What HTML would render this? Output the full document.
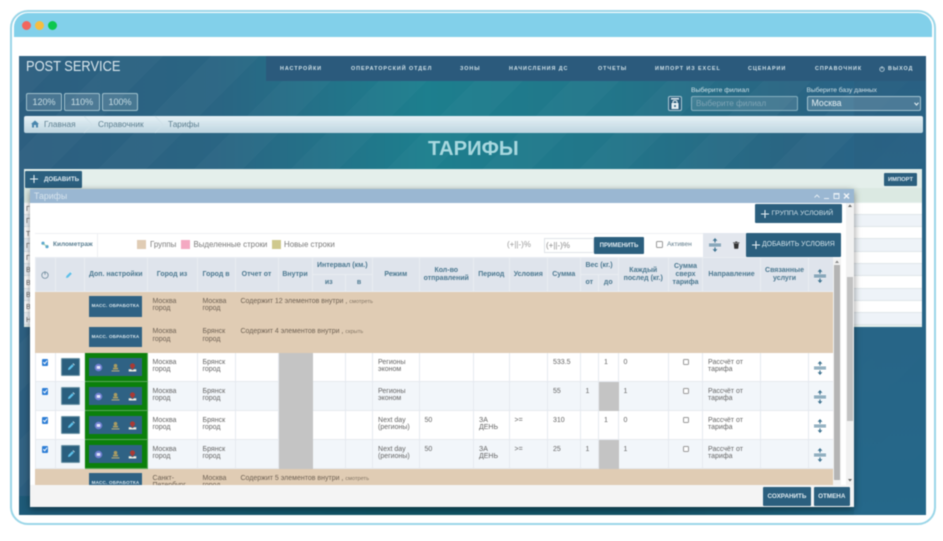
<!DOCTYPE html>
<html lang="ru"><head><meta charset="utf-8"><title>Тарифы</title>
<style>
*{box-sizing:border-box}
html,body{margin:0;padding:0;background:#fff}
body{width:943px;height:541px;overflow:hidden;position:relative;font-family:"Liberation Sans",sans-serif}
#w{position:absolute;left:0;top:0;width:943px;height:541px;filter:blur(.45px)}
.a{position:absolute;white-space:nowrap}
.nav{position:absolute;top:66px;font-size:5.4px;line-height:7px;font-weight:bold;letter-spacing:.95px;color:#d2e2e9;white-space:nowrap}
.zb{position:absolute;top:93px;width:36px;height:18px;border:1px solid #9fc0cc;border-radius:2px;background:rgba(255,255,255,.14);color:#c7dde4;font-size:9px;line-height:16px;text-align:center}
.btn{position:absolute;background:#2b5f7e;color:#dfeaf0;white-space:nowrap;text-align:center;border-radius:1px}
.row{position:absolute;left:0;width:898px;height:12.3px;border-bottom:1px solid #dfe6ea}
table{border-collapse:collapse;table-layout:fixed;width:798px;position:absolute;left:-.5px;top:0}
td,th{border:1px solid #e6eaef;padding:0;vertical-align:top;overflow:hidden}
th{background:#dfe4ec;color:#4b7890;font-size:7px;line-height:8px;font-weight:bold;text-align:center;vertical-align:middle;border-color:#e9edf2}
td{font-size:7px;line-height:7.7px;color:#666;padding:5.5px 4px 0 5px}
tr.g td{background:#e0ccb4;border-color:#e0ccb4;color:#6f6254}
tr.d td{height:29px;background:#fff}
tr.e td{background:#f2f6fa}
tr.d td.gr,tr.e td.gr{background:#c4c4c4;border-color:#c4c4c4}
td.gn{background:#0b800b!important;padding:0;position:relative;border-color:#5aa85a}
td.c{padding:0;position:relative}
.mb{position:absolute;left:4px;top:4px;width:53px;height:20.5px;background:#2f6284;color:#dce8ee;font-size:4.6px;font-weight:bold;line-height:20.5px;text-align:center;letter-spacing:.2px}
.gb{position:absolute;left:4px;top:5px;width:53px;height:18px;background:#2f6284}
.eb{position:absolute;left:5px;top:5px;width:19.5px;height:18px;background:#2b5f7e;border:1px solid #6d95a8;border-radius:1px}
.cb{position:absolute;left:6px;top:6px;width:6.5px;height:6.5px;background:#2f7fd6;border-radius:1px}
.ub{position:absolute;left:13.5px;top:5.5px;width:6.5px;height:6.5px;background:#fff;border:1px solid #9a9a9a;border-radius:1.2px}
small{font-size:5.6px;color:#857766}
svg{position:absolute;overflow:visible}
</style></head><body>
<svg width="0" height="0" style="position:absolute"><defs>
<symbol id="sp" viewBox="0 0 12 14"><path d="M0 6.2H12M0 7.8H12" stroke="#3e7390" stroke-width=".8" fill="none"/><path d="M6 1V4.6M6 9.4V13" stroke="#3e7390" stroke-width="1.2"/><path d="M3.6 2.8L6 0L8.4 2.8ZM3.6 11.2L6 14L8.4 11.2Z" fill="#3e7390"/></symbol>
<symbol id="pn" viewBox="0 0 8 8"><path d="M1 7L1.4 5L5.2 1.2L6.8 2.8L3 6.6Z" fill="#5cc0ea"/><path d="M5.6 .8L6.2 .2L7.8 1.8L7.2 2.4Z" fill="#d6eef8"/></symbol>
<symbol id="ck" viewBox="0 0 8 8"><path d="M1.6 4L3.3 5.8L6.4 2" stroke="#fff" stroke-width="1.2" fill="none"/></symbol>
<symbol id="i1" viewBox="0 0 10 10"><circle cx="5" cy="5" r="4.2" fill="#6f7fd0"/><rect x="3" y="3.3" width="4" height="3.2" rx=".5" fill="#dfe4f8"/></symbol>
<symbol id="i2" viewBox="0 0 10 10"><circle cx="5" cy="3" r="2" fill="#a99c63"/><path d="M2.2 7.2V5.2H7.8V7.2Z" fill="#a99c63"/><path d="M.6 8.8H9.4" stroke="#b9ad78" stroke-width="1.2"/></symbol>
<symbol id="i3" viewBox="0 0 10 10"><path d="M5 .4C3 .4 2.2 1.9 2.2 3.2C2.2 4.7 5 7.2 5 7.2C5 7.2 7.8 4.7 7.8 3.2C7.8 1.9 7 .4 5 .4Z" fill="#a93a35"/><path d="M.8 7H3.2L5 8L6.8 7H9.2V9.4H.8Z" fill="#f0ece0"/></symbol>
<symbol id="pl" viewBox="0 0 10 10"><path d="M5 0V10M0 5H10" stroke="#e6f0f5" stroke-width="1.3"/></symbol>
</defs></svg>
<div id="w">
<!-- frame -->
<div class="a" style="left:10px;top:10px;width:926px;height:515px;border:2px solid #9ad6e8;border-radius:18px"></div>
<div class="a" style="left:13.5px;top:13px;width:918px;height:23.5px;background:#82d0ea;border-radius:14px 14px 0 0"></div>
<div class="a" style="left:21.5px;top:21px;width:9px;height:9px;border-radius:50%;background:#f2665e"></div>
<div class="a" style="left:35px;top:21px;width:9px;height:9px;border-radius:50%;background:#f7bd3f"></div>
<div class="a" style="left:48px;top:21px;width:9px;height:9px;border-radius:50%;background:#0dc74e"></div>
<!-- page -->
<div class="a" style="left:19px;top:56px;width:907px;height:459px;overflow:hidden;background:repeating-linear-gradient(135deg,rgba(255,255,255,.022) 0 34px,rgba(255,255,255,0) 34px 68px),linear-gradient(90deg,#2d5f80 0%,#2a6583 22%,#1d7f8e 45%,#22768a 65%,#2a6583 85%,#27638a 100%)">
<div class="a" style="left:0;top:440px;width:907px;height:19px;background:linear-gradient(90deg,#1e5a78 0%,#0f5566 40%,#145468 70%,#24688a 100%)"></div>
<div class="a" style="left:835px;top:0;width:72px;height:459px;background:linear-gradient(180deg,rgba(43,95,128,.7),#25688a)"></div>
</div>
<div class="a" style="left:266px;top:56px;width:660px;height:25px;background:#2b5a7c"></div>
<div class="a" style="left:26px;top:56.5px;font-size:14.6px;line-height:20px;color:#d9e6ec;transform:scaleX(.88);transform-origin:left center">POST SERVICE</div>
<div class="nav" style="left:280px">НАСТРОЙКИ</div>
<div class="nav" style="left:351px">ОПЕРАТОРСКИЙ ОТДЕЛ</div>
<div class="nav" style="left:460px">ЗОНЫ</div>
<div class="nav" style="left:509px">НАЧИСЛЕНИЯ ДС</div>
<div class="nav" style="left:598px">ОТЧЕТЫ</div>
<div class="nav" style="left:655px">ИМПОРТ ИЗ EXCEL</div>
<div class="nav" style="left:748px">СЦЕНАРИИ</div>
<div class="nav" style="left:815px">СПРАВОЧНИК</div>
<svg style="left:879px;top:65.5px" width="6" height="6" viewBox="0 0 6 6"><circle cx="3" cy="3.2" r="2.2" fill="none" stroke="#c8dbe3" stroke-width=".8"/><path d="M3 .4V3" stroke="#c8dbe3" stroke-width=".8"/></svg>
<div class="nav" style="left:888px">ВЫХОД</div>
<div class="zb" style="left:26px">120%</div><div class="zb" style="left:64px">110%</div><div class="zb" style="left:102px">100%</div>
<div class="a" style="left:691px;top:87px;font-size:6.8px;line-height:8px;color:#cfe0e6">Выберите филиал</div>
<div class="a" style="left:806.5px;top:87px;font-size:6.6px;line-height:8px;color:#cfe0e6">Выберите базу данных</div>
<div class="a" style="left:668px;top:96px;width:14px;height:15px;border:1px solid #a9c6d2;border-radius:2px;background:#2a5d7c"></div>
<svg style="left:670px;top:98px" width="10" height="12" viewBox="0 0 10 12"><rect x="1" y="0" width="8" height="1.6" fill="#d9e6ec"/><path d="M3 5V3.8C3 2.2 7 2.2 7 3.8V5" fill="none" stroke="#e6eff3" stroke-width="1"/><rect x="1.5" y="5" width="7" height="6" fill="#e6eff3"/><circle cx="5" cy="8" r="1" fill="#2a5d7c"/></svg>
<div class="a" style="left:690.5px;top:96px;width:107.5px;height:15px;border:1px solid #86afbf;border-radius:2px;background:rgba(255,255,255,.12);color:#7fa4b5;font-size:8.2px;line-height:13px;padding-left:4.5px">Выберите филиал</div>
<div class="a" style="left:806.5px;top:96px;width:114px;height:15px;border:1px solid #a3c3cf;border-radius:2px;background:rgba(255,255,255,.16);color:#e4eef2;font-size:8.8px;line-height:13px;padding-left:4px">Москва</div>
<svg style="left:913.5px;top:101.5px" width="5" height="4" viewBox="0 0 5 4"><path d="M.5 .8L2.5 3L4.5 .8" fill="none" stroke="#e4eef2" stroke-width="1.1"/></svg>
<!-- breadcrumb -->
<div class="a" style="left:23.5px;top:116px;width:899px;height:16.5px;border-radius:2px;background:linear-gradient(180deg,#e6f1f6,#bed5e0)"></div>
<svg style="left:31px;top:120px" width="8" height="8" viewBox="0 0 8 8"><path d="M0 4L4 .5L8 4H7V7.5H5V5H3V7.5H1V4Z" fill="#4a86ad"/></svg>
<div class="a" style="left:44px;top:119px;font-size:8.3px;line-height:10px;color:#5d7f90">Главная</div>
<svg style="left:83px;top:116px" width="10" height="17" viewBox="0 0 10 17"><path d="M1 0L9 8.5L1 17" fill="none" stroke="#cfe0e8" stroke-width=".8"/></svg>
<div class="a" style="left:98px;top:119px;font-size:8.3px;line-height:10px;color:#5d7f90">Справочник</div>
<svg style="left:154px;top:116px" width="10" height="17" viewBox="0 0 10 17"><path d="M1 0L9 8.5L1 17" fill="none" stroke="#cfe0e8" stroke-width=".8"/></svg>
<div class="a" style="left:168px;top:119px;font-size:8.3px;line-height:10px;color:#5d7f90">Тарифы</div>
<div class="a" style="left:428px;top:137px;font-size:20.2px;line-height:25px;font-weight:bold;color:#a8d8df">ТАРИФЫ</div>
<!-- panel -->
<div class="a" style="left:24px;top:169px;width:898px;height:157.5px;background:#e4efeb;overflow:hidden">
<div class="a" style="left:0;top:19px;width:898px;height:14px;background:#dbe9e2"></div>
<div class="row" style="top:33.5px;background:#fff"></div><div class="row" style="top:45.8px;background:#eef3f8"></div>
<div class="row" style="top:58.1px;background:#fff"></div><div class="row" style="top:70.4px;background:#eef3f8"></div>
<div class="row" style="top:82.7px;background:#fff"></div><div class="row" style="top:95px;background:#eef3f8"></div>
<div class="row" style="top:107.3px;background:#fff"></div><div class="row" style="top:119.6px;background:#eef3f8"></div>
<div class="row" style="top:131.9px;background:#fff"></div><div class="row" style="top:144.2px;background:#eef3f8"></div>
</div>
<div class="a" style="left:26px;top:204px;font-size:7px;line-height:12.3px;color:#666;white-space:normal;width:5px">Г<br>Г<br>Т<br>Г<br>Г<br>В<br>В<br>В<br>В<br>Н</div>
<div class="btn" style="left:25px;top:171px;width:57px;height:17px;background:#2b5f7e"></div>
<svg style="left:29.5px;top:175px" width="8" height="8"><use href="#pl"/></svg>
<div class="a" style="left:44px;top:176px;font-size:6.2px;line-height:7px;font-weight:bold;color:#dfeaf0">ДОБАВИТЬ</div>
<div class="btn" style="left:884px;top:173px;width:33px;height:13px;font-size:5.8px;line-height:14px;font-weight:bold">ИМПОРТ</div>
<!-- modal -->
<div class="a" style="left:30px;top:189px;width:824px;height:318px;background:#fff;box-shadow:0 2px 7px rgba(0,0,0,.45)"></div>
<div class="a" style="left:30px;top:189px;width:824px;height:13.5px;background:#9ab7d2"></div>
<div class="a" style="left:34px;top:190.5px;font-size:8.8px;line-height:10px;color:#d6e3ed">Тарифы</div>
<svg style="left:814px;top:192px" width="38" height="8" viewBox="0 0 38 8"><path d="M.5 5.5L3 3L5.5 5.5" fill="none" stroke="#e6eef4" stroke-width=".9"/><path d="M10 6.5H15" stroke="#e6eef4" stroke-width="1"/><rect x="20" y="1.5" width="5" height="5" fill="none" stroke="#e6eef4" stroke-width="1"/><path d="M20 2H25" stroke="#e6eef4" stroke-width="1.4"/><path d="M30 1.5L35 6.5M35 1.5L30 6.5" stroke="#f2f6f9" stroke-width="1.4"/></svg>
<!-- outer scrollbar -->
<div class="a" style="left:846px;top:202.5px;width:7.5px;height:283px;background:#f1f1f1"></div>
<div class="a" style="left:847px;top:277px;width:6px;height:144px;background:#c1c1c1"></div>
<svg style="left:848px;top:204px" width="4" height="3"><path d="M0 3L2 .5L4 3Z" fill="#666"/></svg>
<svg style="left:848px;top:479px" width="4" height="3"><path d="M0 0L2 2.5L4 0Z" fill="#666"/></svg>
<div class="btn" style="left:755px;top:204px;width:87px;height:18.5px"></div>
<svg style="left:761px;top:210px" width="8" height="8"><use href="#pl"/></svg>
<div class="a" style="left:771.5px;top:210px;font-size:6.8px;line-height:8px;color:#cfe0e8">ГРУППА УСЛОВИЙ</div>
<!-- toolbar -->
<div class="a" style="left:35px;top:232.5px;width:806px;height:25px;background:#fff;border-top:1px solid #eef0f3"></div>
<div class="a" style="left:97px;top:233px;width:1px;height:24px;background:#eef0f3"></div>
<div class="a" style="left:702.5px;top:232.5px;width:43px;height:25px;background:#e3e7ee"></div>
<svg style="left:40.5px;top:240.5px" width="8" height="8" viewBox="0 0 8 8"><circle cx="2" cy="2.2" r="1.6" fill="#58a6cf"/><circle cx="6" cy="5.6" r="1.6" fill="#58a6cf"/><path d="M2 3L6 5" stroke="#8cc2a0" stroke-width=".8"/></svg>
<div class="a" style="left:53px;top:241px;font-size:6.5px;line-height:8px;font-weight:bold;color:#5b7f92">Километраж</div>
<div class="a" style="left:137.3px;top:240.3px;width:9px;height:8.7px;background:#e0ccb4"></div>
<div class="a" style="left:150px;top:240px;font-size:7.9px;line-height:10px;color:#7a7a7a">Группы</div>
<div class="a" style="left:180.5px;top:240.3px;width:9px;height:8.7px;background:#f4a9c2"></div>
<div class="a" style="left:193.5px;top:240px;font-size:7.9px;line-height:10px;color:#7a7a7a">Выделенные строки</div>
<div class="a" style="left:271.5px;top:240.3px;width:9px;height:8.7px;background:#cfc98e"></div>
<div class="a" style="left:284px;top:240px;font-size:7.9px;line-height:10px;color:#7a7a7a">Новые строки</div>
<div class="a" style="left:507px;top:240px;font-size:8px;line-height:10px;color:#9a9a9a">(+||-)%</div>
<div class="a" style="left:544px;top:237.5px;width:50px;height:15px;border:1px solid #e1e4e8;font-size:8px;line-height:13px;color:#8a8a8a;padding-left:1px">(+||-)%</div>
<div class="btn" style="left:594px;top:236.5px;width:50px;height:17px;font-size:6.1px;line-height:18px;font-weight:bold">ПРИМЕНИТЬ</div>
<div class="a" style="left:655.5px;top:241px;width:7px;height:7px;background:#fff;border:1px solid #9a9a9a;border-radius:1.5px"></div>
<div class="a" style="left:667px;top:240.5px;font-size:6.6px;line-height:8px;color:#5f7a8a">Активен</div>
<svg style="left:708.5px;top:237.5px" width="12" height="14"><use href="#sp"/></svg>
<svg style="left:733px;top:240.5px" width="6.5" height="8" viewBox="0 0 7 8"><path d="M0 1.2H7V2H0ZM2.4 .2H4.6V1H2.4Z" fill="#333"/><path d="M.8 2.4H6.2L5.6 8H1.4Z" fill="#333"/></svg>
<div class="btn" style="left:745.5px;top:232.5px;width:95.5px;height:24px"></div>
<svg style="left:751.5px;top:241px" width="8" height="8"><use href="#pl"/></svg>
<div class="a" style="left:762px;top:241px;font-size:6.9px;line-height:8px;color:#cfe0e8">ДОБАВИТЬ УСЛОВИЯ</div>
<!-- table -->
<div class="a" style="left:35px;top:257px;width:798px;height:228px;overflow:hidden;background:#e0ccb4">
<table>
<colgroup><col style="width:20px"><col style="width:29.5px"><col style="width:62.5px"><col style="width:50px"><col style="width:38px"><col style="width:43px"><col style="width:34px"><col style="width:33.5px"><col style="width:27px"><col style="width:46.5px"><col style="width:54.5px"><col style="width:35.5px"><col style="width:38.5px"><col style="width:32.5px"><col style="width:18.5px"><col style="width:19.5px"><col style="width:50.5px"><col style="width:34px"><col style="width:58px"><col style="width:48px"><col style="width:24.5px"></colgroup>
<tr style="height:17px">
<th rowspan="2" style="position:relative"><svg style="left:5.5px;top:13px" width="8" height="8" viewBox="0 0 8 8"><circle cx="4" cy="4.2" r="3.2" fill="none" stroke="#6f8b9c" stroke-width=".8"/><path d="M4 .4V3.6" stroke="#6f8b9c" stroke-width=".9"/></svg></th>
<th rowspan="2" style="position:relative"><svg style="left:9.5px;top:13px" width="8" height="8"><use href="#pn"/></svg></th>
<th rowspan="2">Доп. настройки</th><th rowspan="2">Город из</th><th rowspan="2">Город в</th><th rowspan="2">Отчет от</th><th rowspan="2">Внутри</th>
<th colspan="2">Интервал (км.)</th>
<th rowspan="2">Режим</th><th rowspan="2">Кол-во<br>отправлений</th><th rowspan="2">Период</th><th rowspan="2">Условия</th><th rowspan="2">Сумма</th>
<th colspan="2">Вес (кг.)</th>
<th rowspan="2">Каждый<br>послед (кг.)</th><th rowspan="2">Сумма<br>сверх<br>тарифа</th><th rowspan="2">Направление</th><th rowspan="2">Связанные<br>услуги</th>
<th rowspan="2" style="position:relative"><svg style="left:5px;top:10.5px" width="12" height="14"><use href="#sp"/></svg></th>
</tr>
<tr style="height:17px"><th>из</th><th>в</th><th>от</th><th>до</th></tr>
<tr class="g" style="height:30.5px"><td></td><td></td><td class="c"><div class="mb">МАСС. ОБРАБОТКА</div></td><td>Москва<br>город</td><td>Москва<br>город</td><td colspan="16" style="padding-left:5px">Содержит 12 элементов внутри , <small>смотреть</small></td></tr>
<tr class="g" style="height:30.5px"><td></td><td></td><td class="c"><div class="mb">МАСС. ОБРАБОТКА</div></td><td>Москва<br>город</td><td>Брянск<br>город</td><td colspan="16" style="padding-left:5px">Содержит 4 элементов внутри , <small>скрыть</small></td></tr>
<tr class="d">
<td class="c"><div class="cb"><svg width="6.5" height="6.5"><use href="#ck"/></svg></div></td><td class="c"><div class="eb"><svg style="left:5px;top:4px" width="8" height="8"><use href="#pn"/></svg></div></td>
<td class="gn"><div class="gb"><svg style="left:5px;top:4.5px" width="9" height="9"><use href="#i1"/></svg><svg style="left:22px;top:4.5px" width="9" height="9"><use href="#i2"/></svg><svg style="left:39px;top:4.5px" width="9" height="9"><use href="#i3"/></svg></div></td>
<td>Москва<br>город</td><td>Брянск<br>город</td><td></td><td class="gr"></td><td></td><td></td><td>Регионы<br>эконом</td><td></td><td></td><td></td><td>533.5</td><td></td><td>1</td><td>0</td><td class="c"><div class="ub"></div></td><td>Рассчёт от<br>тарифа</td><td></td><td class="c"><svg style="left:5px;top:7.5px" width="12" height="14"><use href="#sp"/></svg></td>
</tr>
<tr class="d e">
<td class="c"><div class="cb"><svg width="6.5" height="6.5"><use href="#ck"/></svg></div></td><td class="c"><div class="eb"><svg style="left:5px;top:4px" width="8" height="8"><use href="#pn"/></svg></div></td>
<td class="gn"><div class="gb"><svg style="left:5px;top:4.5px" width="9" height="9"><use href="#i1"/></svg><svg style="left:22px;top:4.5px" width="9" height="9"><use href="#i2"/></svg><svg style="left:39px;top:4.5px" width="9" height="9"><use href="#i3"/></svg></div></td>
<td>Москва<br>город</td><td>Брянск<br>город</td><td></td><td class="gr"></td><td></td><td></td><td>Регионы<br>эконом</td><td></td><td></td><td></td><td>55</td><td>1</td><td class="gr"></td><td>1</td><td class="c"><div class="ub"></div></td><td>Рассчёт от<br>тарифа</td><td></td><td class="c"><svg style="left:5px;top:7.5px" width="12" height="14"><use href="#sp"/></svg></td>
</tr>
<tr class="d">
<td class="c"><div class="cb"><svg width="6.5" height="6.5"><use href="#ck"/></svg></div></td><td class="c"><div class="eb"><svg style="left:5px;top:4px" width="8" height="8"><use href="#pn"/></svg></div></td>
<td class="gn"><div class="gb"><svg style="left:5px;top:4.5px" width="9" height="9"><use href="#i1"/></svg><svg style="left:22px;top:4.5px" width="9" height="9"><use href="#i2"/></svg><svg style="left:39px;top:4.5px" width="9" height="9"><use href="#i3"/></svg></div></td>
<td>Москва<br>город</td><td>Брянск<br>город</td><td></td><td class="gr"></td><td></td><td></td><td>Next day<br>(регионы)</td><td>50</td><td>ЗА<br>ДЕНЬ</td><td>&gt;=</td><td>310</td><td></td><td>1</td><td>0</td><td class="c"><div class="ub"></div></td><td>Рассчёт от<br>тарифа</td><td></td><td class="c"><svg style="left:5px;top:7.5px" width="12" height="14"><use href="#sp"/></svg></td>
</tr>
<tr class="d e">
<td class="c"><div class="cb"><svg width="6.5" height="6.5"><use href="#ck"/></svg></div></td><td class="c"><div class="eb"><svg style="left:5px;top:4px" width="8" height="8"><use href="#pn"/></svg></div></td>
<td class="gn"><div class="gb"><svg style="left:5px;top:4.5px" width="9" height="9"><use href="#i1"/></svg><svg style="left:22px;top:4.5px" width="9" height="9"><use href="#i2"/></svg><svg style="left:39px;top:4.5px" width="9" height="9"><use href="#i3"/></svg></div></td>
<td>Москва<br>город</td><td>Брянск<br>город</td><td></td><td class="gr"></td><td></td><td></td><td>Next day<br>(регионы)</td><td>50</td><td>ЗА<br>ДЕНЬ</td><td>&gt;=</td><td>25</td><td>1</td><td class="gr"></td><td>1</td><td class="c"><div class="ub"></div></td><td>Рассчёт от<br>тарифа</td><td></td><td class="c"><svg style="left:5px;top:7.5px" width="12" height="14"><use href="#sp"/></svg></td>
</tr>
<tr class="g" style="height:30.5px"><td></td><td></td><td class="c"><div class="mb">МАСС. ОБРАБОТКА</div></td><td>Санкт-<br>Петербург</td><td>Москва<br>город</td><td colspan="16" style="padding-left:5px">Содержит 5 элементов внутри , <small>смотреть</small></td></tr>
</table>
</div>
<!-- inner scrollbar -->
<div class="a" style="left:833px;top:257.5px;width:8px;height:227.5px;background:#f1f1f1"></div>
<div class="a" style="left:834px;top:265px;width:6px;height:215px;background:#b4b4b4"></div>
<svg style="left:835px;top:260px" width="4" height="3"><path d="M0 3L2 .5L4 3Z" fill="#888"/></svg>
<!-- footer -->
<div class="a" style="left:30px;top:485px;width:824px;height:22px;background:#f4f4f4"></div>
<div class="btn" style="left:763px;top:487px;width:48px;height:19px;font-size:6.3px;line-height:19.5px;font-weight:bold">СОХРАНИТЬ</div>
<div class="btn" style="left:813.5px;top:487px;width:36.5px;height:19px;font-size:6.3px;line-height:19.5px;font-weight:bold">ОТМЕНА</div>
</div>
</body></html>
